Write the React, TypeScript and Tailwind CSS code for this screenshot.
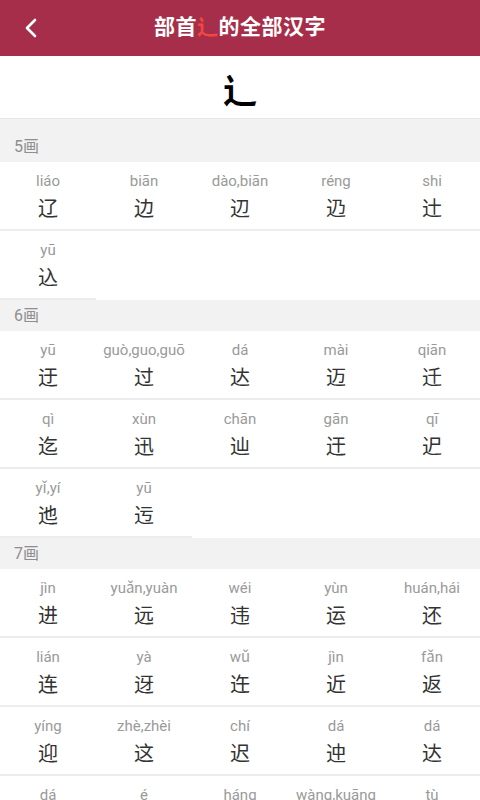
import React from "react";

type Zi = { py: string; ch: string };

const groups: { title: string; items: Zi[] }[] = [
  {
    title: "5画",
    items: [
      { py: "liáo", ch: "辽" },
      { py: "biān", ch: "边" },
      { py: "dào,biān", ch: "辺" },
      { py: "réng", ch: "辸" },
      { py: "shi", ch: "辻" },
      { py: "yū", ch: "込" },
    ],
  },
  {
    title: "6画",
    items: [
      { py: "yū", ch: "迂" },
      { py: "guò,guo,guō", ch: "过" },
      { py: "dá", ch: "达" },
      { py: "mài", ch: "迈" },
      { py: "qiān", ch: "迁" },
      { py: "qì", ch: "迄" },
      { py: "xùn", ch: "迅" },
      { py: "chān", ch: "辿" },
      { py: "gān", ch: "迀" },
      { py: "qī", ch: "迉" },
      { py: "yǐ,yí", ch: "迆" },
      { py: "yū", ch: "迃" },
    ],
  },
  {
    title: "7画",
    items: [
      { py: "jìn", ch: "进" },
      { py: "yuǎn,yuàn", ch: "远" },
      { py: "wéi", ch: "违" },
      { py: "yùn", ch: "运" },
      { py: "huán,hái", ch: "还" },
      { py: "lián", ch: "连" },
      { py: "yà", ch: "迓" },
      { py: "wǔ", ch: "迕" },
      { py: "jìn", ch: "近" },
      { py: "fǎn", ch: "返" },
      { py: "yíng", ch: "迎" },
      { py: "zhè,zhèi", ch: "这" },
      { py: "chí", ch: "迟" },
      { py: "dá", ch: "迚" },
      { py: "dá", ch: "达" },
      { py: "dá", ch: "迖" },
      { py: "é", ch: "迗" },
      { py: "háng", ch: "迒" },
      { py: "wàng,kuāng", ch: "迋" },
      { py: "tù", ch: "迌" },
    ],
  },
];

const font = {
  fontFamily: '"Roboto", "Noto Sans CJK SC", sans-serif',
};

export default function App() {
  return (
    <div className="w-[480px] h-[800px] overflow-hidden bg-white" style={font}>
      {/* top bar */}
      <div className="relative h-14 bg-[#a72e4a] flex items-center justify-center">
        <svg
          className="absolute left-[22px] top-[17px]"
          width="18"
          height="22"
          viewBox="0 0 18 22"
          fill="none"
        >
          <path d="M13 3 L5 11 L13 19" stroke="white" strokeWidth="2.6" strokeLinecap="round" strokeLinejoin="round" />
        </svg>
        <h1 className="text-[21px] font-bold text-white tracking-[0.5px]">
          部首<span className="text-[#f2473f]">辶</span>的全部汉字
        </h1>
      </div>

      {/* radical */}
      <div className="h-[63px] flex items-center justify-center border-b border-[#e6e6e6]">
        <span
          className="text-[34px] text-black font-bold leading-none pt-1"
          style={{ fontFamily: '"Noto Sans CJK SC", serif' }}
        >
          辶
        </span>
      </div>

      {groups.map((g, gi) => (
        <div key={g.title}>
          <div
            className={
              "bg-[#f2f2f2] flex items-center pl-[14px] text-[16px] text-[#8e8e8e] " +
              (gi === 0 ? "h-[43px] pt-3" : "h-[31px]")
            }
          >
            {g.title}
          </div>
          <div className="grid grid-cols-5">
            {g.items.map((z, i) => (
              <div
                key={i}
                className="flex flex-col items-center pt-[9px] pb-[6px] border-b-2 border-[#ececec]"
              >
                <span className="text-[15px] leading-5 text-[#9a9a9a]">{z.py}</span>
                <span className="mt-1 text-[20px] leading-7 text-[#333333]">{z.ch}</span>
              </div>
            ))}
          </div>
        </div>
      ))}
    </div>
  );
}
